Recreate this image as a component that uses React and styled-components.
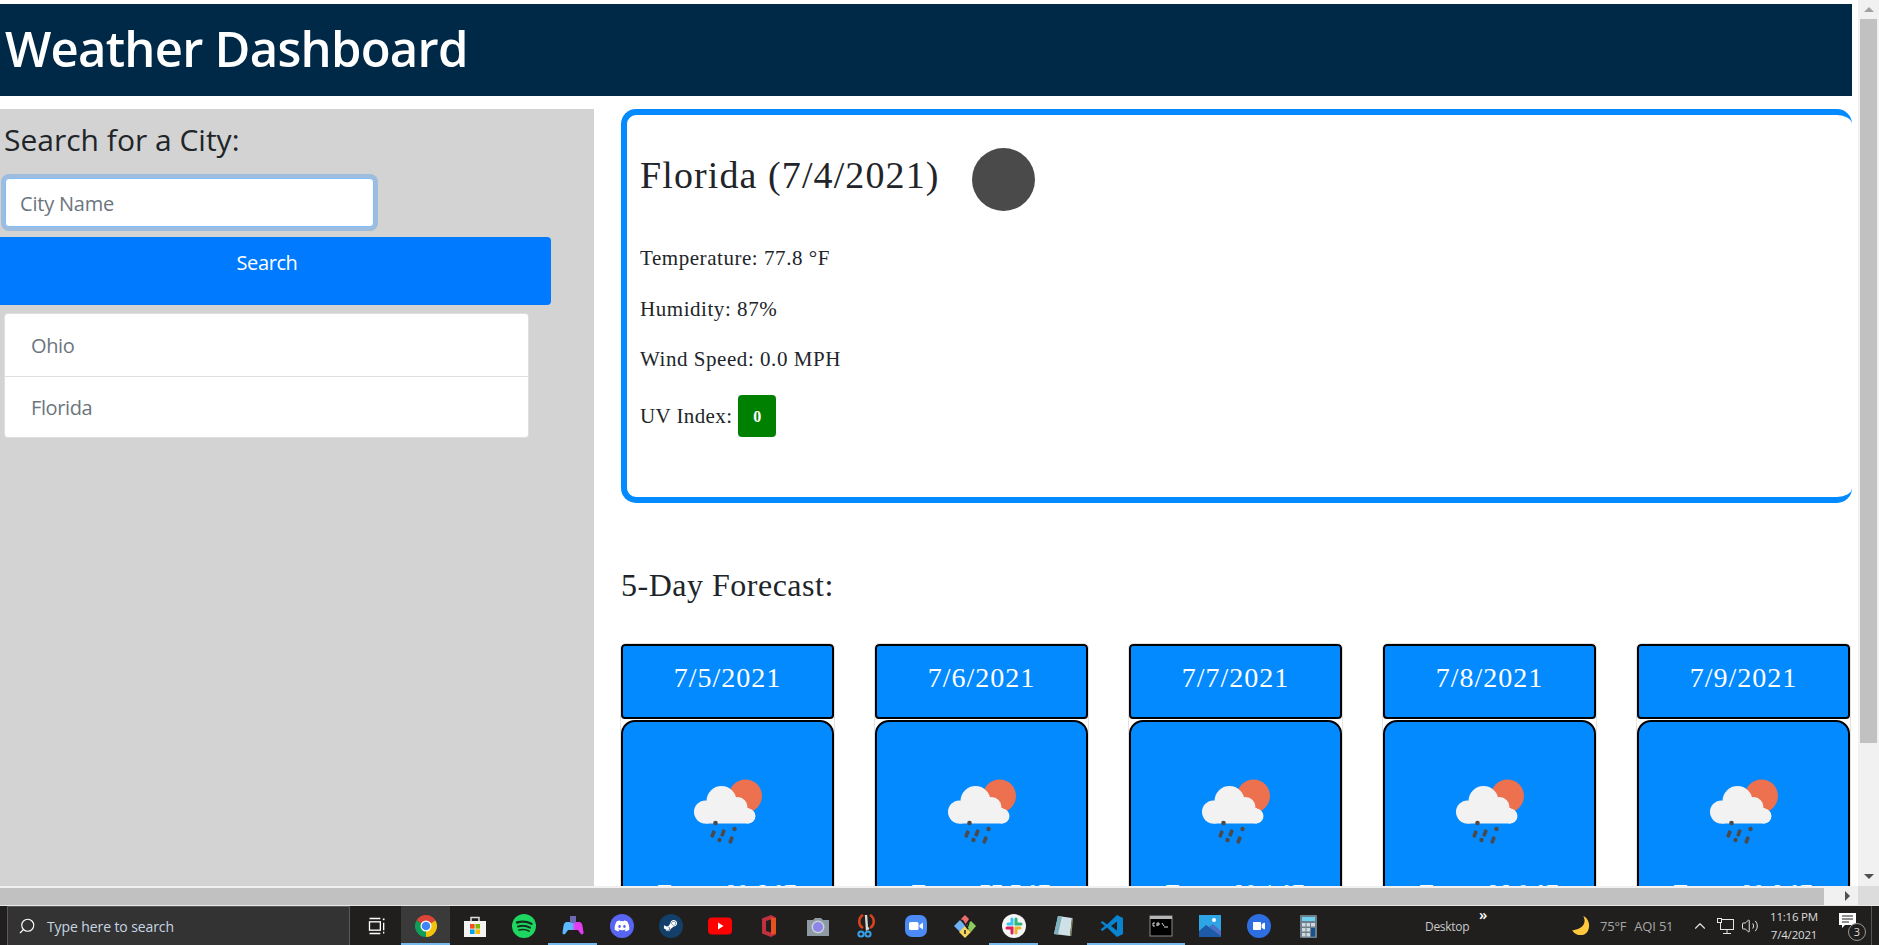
import React from 'react'
import styled, { createGlobalStyle } from 'styled-components'
import { FaDiscord, FaSteamSymbol, FaVideo } from 'react-icons/fa'
import { Search, ChevronUp, Volume2 } from 'lucide-react'

const GlobalStyle = createGlobalStyle`
  html, body {
    margin: 0;
    padding: 0;
    overflow: hidden;
    background: #fff;
  }
  * {
    box-sizing: border-box;
  }
`

const sans = `"Open Sans", "Noto Sans", sans-serif`
const serif = `"Liberation Serif", serif`
const blue = '#038aff'

const Screen = styled.div`
  width: 1879px;
  height: 945px;
  display: flex;
  flex-direction: column;
  overflow: hidden;
`

const BrowserArea = styled.div`
  display: flex;
  height: 886px;
`

const Page = styled.div`
  width: 1852px;
  height: 886px;
  margin-right: 6px;
  padding-top: 4px;
  overflow: hidden;
  flex: none;
`

const Header = styled.header`
  height: 92px;
  background: #002947;
  color: #fff;
  display: flex;
  align-items: center;
  padding: 0 0 4px 5px;
`

const Title = styled.h1`
  margin: 0;
  font: 600 49px/1 ${sans};
  letter-spacing: -0.75px;
`

const Columns = styled.div`
  display: flex;
  margin-top: 13px;
  gap: 27px;
  height: 790px;
`

const Sidebar = styled.aside`
  width: 594px;
  flex: none;
  background: #d3d3d3;
  padding-top: 11px;
`

const SearchHeading = styled.h3`
  margin: 0 0 18px 4px;
  font: 500 30px/40px ${sans};
  letter-spacing: 0;
  color: #212529;
`

const CityInput = styled.input`
  display: block;
  width: 369px;
  height: 49px;
  margin-left: 5px;
  padding: 2px 14px 0;
  border: 1px solid #80bdff;
  border-radius: 4px;
  background: #fff;
  box-shadow: 0 0 0 4px rgba(0, 123, 255, 0.25);
  outline: none;
  font: 400 20px ${sans};
  letter-spacing: -0.2px;
  &::placeholder {
    color: #6c757d;
    opacity: 1;
  }
`

const SearchButton = styled.button`
  display: flex;
  justify-content: center;
  align-items: flex-start;
  width: 568px;
  height: 68px;
  margin: 10px 0 8px -17px;
  padding: 10px 0 0;
  border: 0;
  border-radius: 4px;
  background: #007bff;
  color: #fff;
  font: 400 20px/32px ${sans};
  letter-spacing: -0.4px;
`

const CityList = styled.ul`
  width: 525px;
  margin: 0 0 0 4px;
  padding: 0;
  list-style: none;
  background: #fff;
  border: 1px solid rgba(0, 0, 0, 0.125);
  border-radius: 4px;
`

const CityItem = styled.li`
  height: 61.5px;
  padding: 2px 0 0 26px;
  display: flex;
  align-items: center;
  font: 400 20px ${sans};
  letter-spacing: -0.4px;
  color: #6c757d;
  & + & {
    border-top: 1px solid rgba(0, 0, 0, 0.125);
  }
`

const Main = styled.main`
  flex: 1;
  min-width: 0;
  font-family: ${serif};
  color: #212529;
`

const CurrentCard = styled.section`
  height: 394px;
  border: 6px solid ${blue};
  border-right: 0;
  border-radius: 15px;
  padding: 33px 0 0 13px;
`

const CityRow = styled.div`
  display: flex;
  align-items: center;
  height: 63px;
  margin-bottom: 32px;
`

const CityTitle = styled.h2`
  margin: 0 32px 10px 0;
  font: 400 38px/1 ${serif};
  letter-spacing: 1.1px;
`

const Moon = styled.div`
  width: 63px;
  height: 63px;
  border-radius: 50%;
  background: #4a4a4a;
`

const Stat = styled.p`
  margin: 0 0 20.5px;
  height: 30px;
  font-size: 21px;
  line-height: 30px;
  letter-spacing: 0.55px;
`

const UvRow = styled.div`
  display: flex;
  align-items: center;
  gap: 6px;
  height: 42px;
  font-size: 21px;
  letter-spacing: 0.4px;
  margin-top: 21px;
`

const UvBadge = styled.span`
  width: 38px;
  height: 42px;
  border-radius: 4px;
  background: #008000;
  color: #fff;
  display: flex;
  align-items: center;
  justify-content: center;
  padding-top: 2px;
  font-size: 16px;
  font-weight: 700;
`

const ForecastHeading = styled.h3`
  margin: 62px 0 39px;
  font: 400 32px/40px ${serif};
  letter-spacing: 0.5px;
`

const ForecastRow = styled.div`
  display: flex;
  gap: 41px;
  width: 1229px;
`

const DayCard = styled.article`
  width: 213px;
  flex: none;
  outline: 1px solid #e2e2e2;
  border-radius: 4px;
`

const DayHeader = styled.div`
  height: 75px;
  margin-bottom: 1px;
  background: ${blue};
  border: 2.5px solid #000;
  border-radius: 4px;
  color: #fff;
  display: flex;
  align-items: center;
  justify-content: center;
  padding-bottom: 7px;
  font-size: 28px;
  letter-spacing: 1px;
`

const DayBody = styled.div`
  height: 300px;
  background: ${blue};
  border: 2.5px solid #000;
  border-radius: 14px;
  color: #fff;
  text-align: center;
  padding-top: 38px;
`

const WeatherSvg = styled.svg`
  display: block;
  margin: 0 auto 27px;
`

const DayText = styled.p`
  margin: 0;
  font-size: 22px;
  line-height: 30px;
  letter-spacing: 1px;
`

const VScroll = styled.div`
  width: 21px;
  height: 886px;
  flex: none;
  background: #f1f1f1;
  display: flex;
  flex-direction: column;
  align-items: center;
`

const ArrowBox = styled.div`
  height: ${p => p.$h}px;
  flex: none;
  display: flex;
  align-items: center;
  justify-content: center;
`

const TriUp = styled.div`
  border-left: 5px solid transparent;
  border-right: 5px solid transparent;
  border-bottom: 5px solid #a3a3a3;
`

const TriDown = styled.div`
  border-left: 5px solid transparent;
  border-right: 5px solid transparent;
  border-top: 5px solid #505050;
`

const VThumb = styled.div`
  width: 17px;
  height: 724px;
  flex: none;
  background: #c1c1c1;
`

const VSpacer = styled.div`
  flex: 1;
`

const HScroll = styled.div`
  height: 20px;
  flex: none;
  display: flex;
  background: #f1f1f1;
  border-bottom: 1px solid #e8e8e8;
`

const HThumb = styled.div`
  width: 1824px;
  height: 17px;
  margin-top: 2px;
  background: #c1c1c1;
`

const HArrow = styled.div`
  width: 34px;
  display: flex;
  align-items: center;
  justify-content: center;
  padding-left: 12px;
`

const TriRight = styled.div`
  border-top: 5px solid transparent;
  border-bottom: 5px solid transparent;
  border-left: 5px solid #505050;
`

const Corner = styled.div`
  width: 21px;
  background: #dcdcdc;
`

const Taskbar = styled.footer`
  height: 39px;
  flex: none;
  background: #201f1e;
  display: flex;
  align-items: stretch;
  font-family: ${sans};
`

const SearchBox = styled.div`
  width: 343px;
  margin: 0 2px 0 7px;
  background: #333;
  border: 1px solid #5a5a5a;
  border-bottom: 0;
  display: flex;
  align-items: center;
  gap: 11px;
  padding-left: 10px;
  color: #c8d6e2;
  font-size: 14px;
  letter-spacing: -0.1px;
`

const GlassIcon = styled(Search)`
  transform: scaleX(-1);
`

const Slot = styled.div`
  width: 49px;
  flex: none;
  display: flex;
  align-items: center;
  justify-content: center;
  background: ${p => (p.$active ? '#3a3a3a' : 'transparent')};
  border-bottom: 2px solid ${p => (p.$open ? '#76b9ed' : 'transparent')};
  padding-top: 2px;
`

const Disc = styled.span`
  width: 24px;
  height: 24px;
  border-radius: 50%;
  background: ${p => p.$bg};
  color: #fff;
  display: flex;
  align-items: center;
  justify-content: center;
`

const Tray = styled.div`
  flex: 1;
  display: flex;
  align-items: center;
  margin-left: 93px;
  color: #c9c9c9;
  font-size: 12px;
`

const DesktopLabel = styled.span`
  width: 54px;
  letter-spacing: -0.3px;
  padding-top: 2px;
`

const Chevrons = styled.span`
  width: 91px;
  align-self: flex-start;
  color: #fff;
  font-size: 15px;
  font-weight: 600;
  line-height: 16px;
`

const Weather = styled.span`
  display: flex;
  align-items: center;
  gap: 8px;
  width: 109px;
  color: #a8a8a8;
  letter-spacing: -0.2px;
  font-size: 13px;
  white-space: nowrap;
`

const TrayIcons = styled.div`
  display: flex;
  align-items: center;
  gap: 7px;
  width: 68px;
  margin-left: 12px;
`

const Clock = styled.div`
  width: 70px;
  text-align: center;
  font-size: 11.5px;
  line-height: 18px;
  color: #dcdcdc;
  letter-spacing: -0.2px;
`

const Notify = styled.div`
  position: relative;
  margin-left: 9px;
  width: 30px;
  height: 30px;
`

const NotifyBadge = styled.span`
  position: absolute;
  left: 10px;
  top: 12px;
  width: 18px;
  height: 18px;
  border-radius: 50%;
  background: #201f1e;
  border: 1px solid #999;
  color: #ddd;
  font-size: 11px;
  line-height: 16px;
  text-align: center;
`

const DesktopEdge = styled.div`
  width: 1px;
  margin-left: 3px;
  align-self: stretch;
  background: #555;
`

const WeatherIcon = () => (
  <WeatherSvg width="90" height="90" viewBox="0 0 90 90">
    <circle cx="62.5" cy="36" r="16.5" fill="#ed704f" />
    <g fill="#f2f2f2">
      <circle cx="38.5" cy="41" r="15" />
      <circle cx="22.5" cy="52" r="11.5" />
      <circle cx="54.5" cy="47" r="10" />
      <circle cx="65" cy="56" r="7.5" />
      <rect x="22" y="48" width="44" height="15.5" />
    </g>
    <g fill="#4a4a4a">
      <circle cx="32.5" cy="63" r="2.3" />
      <rect x="-1.8" y="-3.6" width="3.6" height="7.2" rx="1" transform="translate(30 74) rotate(20)" />
      <rect x="-1.8" y="-3.6" width="3.6" height="7.2" rx="1" transform="translate(40 73) rotate(20)" />
      <circle cx="51.5" cy="69" r="2.2" />
      <circle cx="36.5" cy="80" r="2.2" />
      <rect x="-1.8" y="-3.6" width="3.6" height="7.2" rx="1" transform="translate(48 80) rotate(20)" />
    </g>
  </WeatherSvg>
)

const Svg = ({ children, size = 24 }) => (
  <svg width={size} height={size} viewBox="0 0 24 24">{children}</svg>
)

const icons = {
  taskView: (
    <Svg size={20}>
      <g fill="none" stroke="#fff" strokeWidth="1.6">
        <rect x="3" y="7" width="13" height="10" />
        <path d="M3 3h13M3 21h13" />
        <path d="M20 8v9M20 19v2" />
      </g>
      <rect x="19" y="3" width="2" height="2" fill="#fff" />
    </Svg>
  ),
  chrome: (
    <Svg>
      <path d="M12 12L2.47 6.5A11 11 0 0 1 21.53 6.5Z" fill="#db4437" />
      <path d="M12 12L21.53 6.5A11 11 0 0 1 12 23Z" fill="#f4c20d" />
      <path d="M12 12L12 23A11 11 0 0 1 2.47 6.5Z" fill="#0f9d58" />
      <circle cx="12" cy="12" r="5.5" fill="#fff" />
      <circle cx="12" cy="12" r="4.3" fill="#4285f4" />
    </Svg>
  ),
  store: (
    <Svg>
      <path d="M8 7V3.5h8V7" fill="none" stroke="#ddd" strokeWidth="1.5" />
      <rect x="1" y="7" width="22" height="16" fill="#f3f3f3" />
      <rect x="7" y="10" width="4.6" height="4.6" fill="#f25022" />
      <rect x="12.4" y="10" width="4.6" height="4.6" fill="#7fba00" />
      <rect x="7" y="15.4" width="4.6" height="4.6" fill="#00a4ef" />
      <rect x="12.4" y="15.4" width="4.6" height="4.6" fill="#ffb900" />
    </Svg>
  ),
  spotify: (
    <Svg>
      <circle cx="12" cy="12" r="12" fill="#1ed760" />
      <g fill="none" stroke="#14301f" strokeLinecap="round">
        <path d="M5 8.5c5-1.4 10-1 14.500 1.300" strokeWidth="2.400" />
        <path d="M6 12.500c4.500-1.200 8.500-.8 12 1.200" strokeWidth="2" />
        <path d="M7 16c3.700-.9 7-.6 10 1" strokeWidth="1.700" />
      </g>
    </Svg>
  ),
  game: (
    <Svg>
      <defs>
        <linearGradient id="padFill" x1="0" x2="1" y1="0" y2="0">
          <stop offset="0.45" stopColor="#5cb8ff" />
          <stop offset="0.6" stopColor="#e63cf0" />
        </linearGradient>
      </defs>
      <path d="M6 8h12c2 0 3 1.500 3.500 4l1 6.500c.2 2-2 2.500-3 1L17 16H7l-2.500 3.500c-1 1.500-3.200 1-3-1L2.500 12C3 9.500 4 8 6 8Z" fill="url(#padFill)" />
      <rect x="9" y="2" width="6" height="7" fill="#6b6bb5" />
    </Svg>
  ),
  discord: <Disc $bg="#5865f2"><FaDiscord size={16} /></Disc>,
  steam: <Disc $bg="#12406a"><FaSteamSymbol size={15} /></Disc>,
  youtube: (
    <Svg>
      <rect y="3.500" width="24" height="17" rx="4" fill="#f00" />
      <path d="M10 8.500l5.500 3.500-5.500 3.500Z" fill="#fff" />
    </Svg>
  ),
  office: (
    <Svg>
      <path d="M5 4.500 14 1l5 2.500v17L14 23l-9-3.500Z" fill="#c2303f" />
      <path d="M14 3.500v17l5-1V4.500Z" fill="#e8501f" />
      <path d="M9 7l5-1.500v13L9 17Z" fill="#201f1e" />
    </Svg>
  ),
  camera: (
    <Svg>
      <path d="M1 6h6l2-2h6l2 2h6v16H1Z" fill="#8d99a3" />
      <circle cx="12" cy="13" r="6.500" fill="#c9d2d8" />
      <circle cx="12" cy="13" r="5" fill="#8f85e8" />
    </Svg>
  ),
  snip: (
    <Svg>
      <path d="M8 1C3 4 3 11 8 14M15 1c5 3 5 10 0 13" fill="none" stroke="#d8431c" strokeWidth="2.600" />
      <path d="M11 1l1 14 2-1" fill="none" stroke="#d9d9d9" strokeWidth="2.400" />
      <circle cx="6" cy="20" r="2.600" fill="none" stroke="#39a0e8" strokeWidth="2" />
      <circle cx="13" cy="20" r="2.600" fill="none" stroke="#39a0e8" strokeWidth="2" />
    </Svg>
  ),
  zoomApp: (
    <Svg>
      <rect x="1" y="1" width="22" height="22" rx="7" fill="#4c8bf5" />
      <rect x="5" y="8" width="9.500" height="8" rx="1.500" fill="#fff" />
      <path d="M15.500 11 19 8.500v7L15.500 13Z" fill="#fff" />
    </Svg>
  ),
  kraken: (
    <Svg>
      <path d="M7 6l6 6-6 6-6-6Z" fill="#6fb1f5" />
      <path d="M18 7l5 5-5 6-5-6Z" fill="#8ccb5e" />
      <path d="M12 12l6 6-6 6-6-6Z" fill="#f4d35e" />
      <path d="M12 1l4 4-4 6-4-6Z" fill="#ee6b6e" />
      <path d="M9 6l6 9M16 9l-2 5M12 16v4" stroke="#201f1e" strokeWidth="1.500" />
    </Svg>
  ),
  slack: (
    <Svg>
      <circle cx="12" cy="12" r="12" fill="#f5f5f5" />
      <g strokeWidth="3" strokeLinecap="round" fill="none">
        <path d="M10 5v5H6" stroke="#36c5f0" />
        <path d="M19 10h-5V5" stroke="#2eb67d" />
        <path d="M14 19v-5h4" stroke="#ecb22e" />
        <path d="M5 14h5v5" stroke="#e01e5a" />
      </g>
    </Svg>
  ),
  notepad: (
    <Svg>
      <path d="M7 2l14 2-2 18-16-2Z" fill="#cfe1e6" />
      <path d="M3 20 7 2l4 .6L7 20.500Z" fill="#7fb2bf" />
      <path d="M19 22l2-18 1 .3-1.600 17.700Z" fill="#8a8a6a" />
    </Svg>
  ),
  vscode: (
    <Svg>
      <path d="M17 1l6 3v16l-6 3-10-9.500L2.500 17 0.500 15.500 5 12 .5 8.500 2.500 7 7 10.500Zm0 6.500L11 12l6 4.500Z" fill="#0a84d0" />
    </Svg>
  ),
  cmd: (
    <Svg>
      <rect x="1" y="2" width="22" height="20" fill="#000" stroke="#8a8a8a" />
      <rect x="1" y="2" width="22" height="3" fill="#b5b5b5" />
      <path d="M4 9h2M4 9v3h2M8 9v3M8 9h2v2H8M13 9l2 3M15 13h4" stroke="#ddd" fill="none" />
    </Svg>
  ),
  photos: (
    <Svg>
      <rect x="1" y="1" width="22" height="22" fill="#2ea6e6" />
      <circle cx="16" cy="6" r="2" fill="#fff" />
      <path d="M1 17l7-6 15 10v2H1Z" fill="#1d5aa8" />
      <path d="M11 13l4-3 8 7v5Z" fill="#4a6fc4" />
    </Svg>
  ),
  zoomCall: <Disc $bg="#2d6fe0"><FaVideo size={12} /></Disc>,
  calc: (
    <Svg>
      <rect x="4" y="1" width="17" height="23" rx="1" fill="#6d7e8c" />
      <rect x="6" y="3" width="13" height="4" fill="#6fd0ee" />
      <g fill="#cfd8de">
        <rect x="6" y="9" width="3.500" height="3.500" />
        <rect x="10.500" y="9" width="3.500" height="3.500" />
        <rect x="15" y="9" width="4" height="3.500" />
        <rect x="6" y="14" width="3.500" height="3.500" />
        <rect x="10.500" y="14" width="3.500" height="3.500" />
        <rect x="6" y="19" width="3.500" height="3.500" />
        <rect x="10.500" y="19" width="3.500" height="3.500" />
      </g>
      <rect x="15" y="14" width="4" height="8.500" fill="#17548f" />
    </Svg>
  )
}

const apps = [
  { key: 'taskView' },
  { key: 'chrome', active: true, open: true },
  { key: 'store' },
  { key: 'spotify' },
  { key: 'game', open: true },
  { key: 'discord' },
  { key: 'steam' },
  { key: 'youtube' },
  { key: 'office' },
  { key: 'camera' },
  { key: 'snip' },
  { key: 'zoomApp' },
  { key: 'kraken' },
  { key: 'slack', open: true },
  { key: 'notepad' },
  { key: 'vscode', open: true },
  { key: 'cmd', open: true },
  { key: 'photos' },
  { key: 'zoomCall' },
  { key: 'calc' }
]

const forecast = [
  { date: '7/5/2021', temp: '80.6' },
  { date: '7/6/2021', temp: '77.7' },
  { date: '7/7/2021', temp: '80.1' },
  { date: '7/8/2021', temp: '86.0' },
  { date: '7/9/2021', temp: '80.8' }
]

function App() {
  return (
    <Screen>
      <GlobalStyle />
      <BrowserArea>
        <Page>
          <Header>
            <Title>Weather Dashboard</Title>
          </Header>
          <Columns>
            <Sidebar>
              <SearchHeading>Search for a City:</SearchHeading>
              <CityInput placeholder="City Name" readOnly />
              <SearchButton>Search</SearchButton>
              <CityList>
                <CityItem>Ohio</CityItem>
                <CityItem>Florida</CityItem>
              </CityList>
            </Sidebar>
            <Main>
              <CurrentCard>
                <CityRow>
                  <CityTitle>Florida (7/4/2021)</CityTitle>
                  <Moon />
                </CityRow>
                <Stat>Temperature: 77.8 °F</Stat>
                <Stat>Humidity: 87%</Stat>
                <Stat>Wind Speed: 0.0 MPH</Stat>
                <UvRow>
                  UV Index:
                  <UvBadge>0</UvBadge>
                </UvRow>
              </CurrentCard>
              <ForecastHeading>5-Day Forecast:</ForecastHeading>
              <ForecastRow>
                {forecast.map(day => (
                  <DayCard key={day.date}>
                    <DayHeader>{day.date}</DayHeader>
                    <DayBody>
                      <WeatherIcon />
                      <DayText>Temp: {day.temp} °F</DayText>
                    </DayBody>
                  </DayCard>
                ))}
              </ForecastRow>
            </Main>
          </Columns>
        </Page>
        <VScroll>
          <ArrowBox $h={19}><TriUp /></ArrowBox>
          <VThumb />
          <VSpacer />
          <ArrowBox $h={19}><TriDown /></ArrowBox>
        </VScroll>
      </BrowserArea>
      <HScroll>
        <HThumb />
        <HArrow><TriRight /></HArrow>
        <Corner />
      </HScroll>
      <Taskbar>
        <SearchBox>
          <GlassIcon size={18} color="#fff" strokeWidth={1.5} />
          Type here to search
        </SearchBox>
        {apps.map(({ key, active, open }) => (
          <Slot key={key} $active={active} $open={open}>
            {icons[key]}
          </Slot>
        ))}
        <Tray>
          <DesktopLabel>Desktop</DesktopLabel>
          <Chevrons>»</Chevrons>
          <Weather>
            <svg width="22" height="22" viewBox="0 0 18 20">
              <path d="M11 1c3 5 1 12-10 13 3 5 11 6 14 1 3-5 1-12-4-14Z" fill="#ffc83d" />
            </svg>
            <span>75°F</span>
            <span>AQI 51</span>
          </Weather>
          <TrayIcons>
            <ChevronUp size={18} color="#e6e6e6" strokeWidth={1.5} />
            <svg width="18" height="18" viewBox="0 0 18 18">
              <g fill="none" stroke="#e6e6e6">
                <rect x="4.500" y="2.500" width="13" height="10" />
                <rect x="1.500" y="1.500" width="4" height="4" fill="#201f1e" />
                <path d="M11 13v3M7 16.500h8" />
              </g>
            </svg>
            <Volume2 size={18} color="#e6e6e6" strokeWidth={1.3} />
          </TrayIcons>
          <Clock>
            <div>11:16 PM</div>
            <div>7/4/2021</div>
          </Clock>
          <Notify>
            <svg width="20" height="18" viewBox="0 0 20 18">
              <path d="M1 2h17v12H7l-3 3v-3H1Z" fill="#fff" />
              <path d="M4 5h11M4 8h11M4 11h7" stroke="#201f1e" />
            </svg>
            <NotifyBadge>3</NotifyBadge>
          </Notify>
          <DesktopEdge />
        </Tray>
      </Taskbar>
    </Screen>
  )
}

export default App
